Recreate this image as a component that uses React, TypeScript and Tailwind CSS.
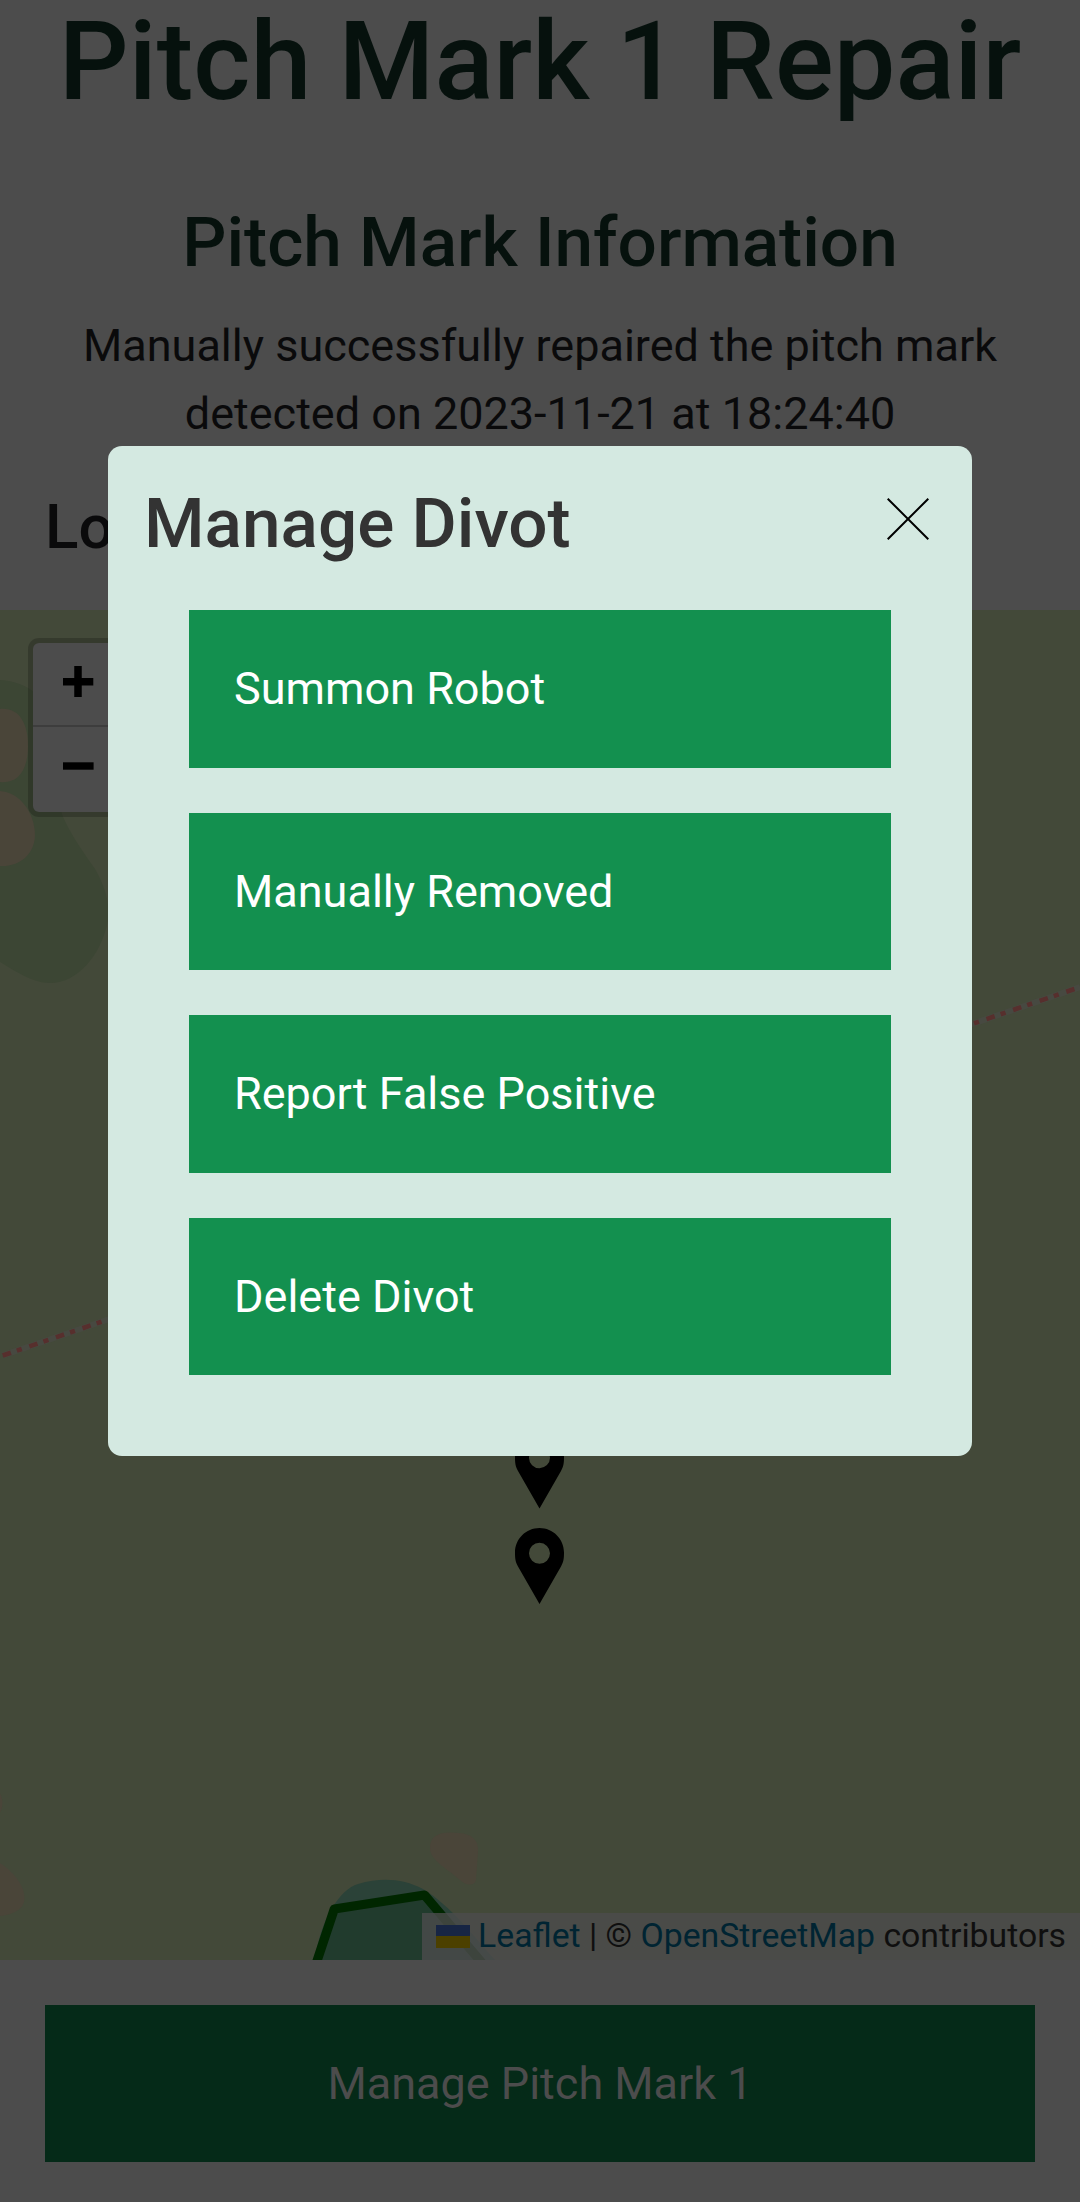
const actions = ["Summon Robot", "Manually Removed", "Report False Positive", "Delete Divot"];

function Pin({ y }: { y: number }) {
  return (
    <path
      transform={`translate(515 ${y})`}
      fillRule="evenodd"
      fill="#000"
      d="M24.5 0C38 0 49 11 49 24.5C49 31 48.5 34 46 38.5L24.5 76L3 38.5C0.5 34 0 31 0 24.5C0 11 11 0 24.5 0ZM24.5 14.8a10.5 10.5 0 1 0 0 21a10.5 10.5 0 1 0 0-21Z"
    />
  );
}

function CourseMap() {
  return (
    <svg className="block h-[1350px] w-[1080px]" viewBox="0 610 1080 1350">
      <rect y="610" width="1080" height="1350" fill="#434939" />
      <path d="M0 680C14 681 26 685 35 693C48 720 52 785 63 817C72 837 84 853 95 869C104 885 112 905 107 925C100 955 78 983 50 983C32 983 14 970 0 962Z" fill="#3c4634" />
      <path d="M0 709C18 707 28 722 28 746C28 770 18 784 0 782Z" fill="#4a4539" />
      <path d="M0 791C19 792 35 812 35 836C34 855 19 867 0 866Z" fill="#4a4539" />
      <path d="M0 1863C14 1872 27 1888 24 1902C22 1911 10 1915 0 1916Z" fill="#4a4539" />
      <path d="M0 1793Q5 1803 0 1813Z" fill="#4a4539" />
      <path d="M430 1848C430 1834 442 1831 459 1833C472 1834 479 1840 478 1852L476 1880C475 1886 466 1886 460 1880C445 1867 430 1860 430 1848Z" fill="#4a4539" />
      <path d="M315 1960C320 1920 340 1889 358 1884C383 1877 403 1879 423 1889C453 1908 470 1932 495 1960Z" fill="#2b4238" />
      <line x1="2.75" y1="1355.5" x2="1080" y2="987.1" stroke="#4b4a48" strokeWidth="6" opacity=".55" />
      <line x1="2.75" y1="1355.5" x2="1080" y2="987.1" stroke="#572f2d" strokeWidth="4.6" strokeDasharray="8.6 6.3 5.2 8" />
      <path d="M314 1970L334.3 1909L424.5 1895L488 1970" fill="#213b2d" stroke="#002600" strokeWidth="9.2" strokeLinejoin="round" />
      <Pin y={1432.4} />
      <Pin y={1528} />
    </svg>
  );
}

function ZoomControl() {
  return (
    <div className="absolute left-[28px] top-[28px] flex h-[179px] w-[96px] flex-col rounded-[11px] border-[5px] border-black/20 bg-[#4c4c4c] bg-clip-padding">
      <div className="h-[84px] border-b-[2px] border-[#3d3d3d]">
        <svg className="block" width="84" height="82" viewBox="33 643 84 82">
          <path d="M63 681.7H93.3M78 666V697" stroke="#000" strokeWidth="7.5" />
        </svg>
      </div>
      <svg className="block" width="84" height="84" viewBox="33 727 84 84">
        <path d="M63 766H93.6" stroke="#000" strokeWidth="7.4" />
      </svg>
    </div>
  );
}

function Attribution() {
  return (
    <div className="absolute bottom-0 right-0 flex h-[47px] w-[658px] items-center justify-end whitespace-nowrap bg-[#4c4c4c]/80 pb-[2px] pr-[14px] text-[33.75px] leading-[45px] text-[#0f0f0f]">
      <svg className="mr-[8px] mt-[1px] block shrink-0" width="34" height="23" viewBox="0 0 34 23">
        <rect width="34" height="11.5" fill="#172544" />
        <rect y="11" width="34" height="12" fill="#4c4000" />
      </svg>
      <span className="text-[#002432]">Leaflet</span>
      <span className="whitespace-pre"> | © </span>
      <span className="text-[#002432]">OpenStreetMap</span>
      <span className="whitespace-pre"> contributors</span>
    </div>
  );
}

function ManageModal() {
  return (
    <div className="absolute left-[108px] top-[446px] h-[1010px] w-[864px] rounded-[14px] bg-[#d4e9e1]">
      <div className="flex h-[164px] items-start justify-between pl-[36px] pr-[43px] pt-[38px]">
        <h2 className="text-[69.3px] font-medium leading-[80px] text-[#333]">Manage Divot</h2>
        <svg className="mt-[14px] block" width="42" height="42" viewBox="0 0 42 42">
          <path d="M.7.7L41.3 41.3M41.3.7L.7 41.3" stroke="#000" strokeWidth="2" />
        </svg>
      </div>
      <div className="flex flex-col gap-[45px] px-[81px]">
        {actions.map((label) => (
          <button key={label} className="h-[157.5px] bg-[#13904f] px-[45px] text-left text-[45px] leading-[67.5px] text-white">
            {label}
          </button>
        ))}
      </div>
    </div>
  );
}

export default function App() {
  return (
    <div className="relative h-[2202px] w-[1080px] overflow-hidden bg-[#4c4c4c] font-[Roboto,sans-serif]">
      <header className="h-[610px] text-center">
        <h1 className="whitespace-nowrap text-[109.6px] font-medium leading-[123px] text-[#06110d]">Pitch Mark 1 Repair</h1>
        <h2 className="mt-[79px] text-[69.3px] font-medium leading-[81px] text-[#06110d]">Pitch Mark Information</h2>
        <p className="mt-[29px] text-[45px] leading-[67.5px] text-[#0a0a0b]">
          Manually successfully repaired the pitch mark
          <br />
          detected on 2023-11-21 at 18:24:40
        </p>
        <h3 className="mt-[43px] pl-[45px] text-left text-[61.9px] font-medium leading-[74px] text-[#0a0a0b]">Location</h3>
      </header>
      <main className="relative h-[1350px]">
        <CourseMap />
        <ZoomControl />
        <Attribution />
      </main>
      <footer className="px-[45px] pt-[45px]">
        <button className="h-[157px] w-full bg-[#052a18] text-[45px] leading-[67.5px] text-[#4c4c4c]">Manage Pitch Mark 1</button>
      </footer>
      <ManageModal />
    </div>
  );
}
